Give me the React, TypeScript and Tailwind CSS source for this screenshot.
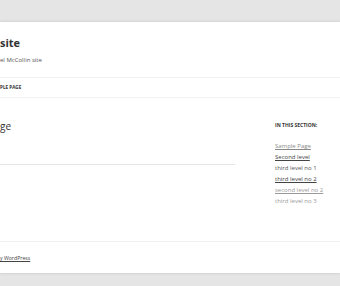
const sectionLinks = [
  { label: "Sample Page", className: "text-[#8a8a8a] underline" },
  { label: "Second level", className: "text-[#444] underline" },
  { label: "third level no 1", className: "text-[#555]" },
  { label: "third level no 2", className: "text-[#444] underline" },
  { label: "second level no 2", className: "text-[#9a9a9a] underline" },
  { label: "third level no 3", className: "text-[#9a9a9a]" },
];

export default function App() {
  return (
    <div
      className="h-[286px] w-[340px] overflow-hidden bg-[#e5e5e5] pt-[22px] text-[#333]"
      style={{ fontFamily: '"Open Sans", "Noto Sans", sans-serif' }}
    >
      <div className="flex h-[251px] flex-col bg-white shadow-[0_0_3px_rgba(0,0,0,0.15)]">
        <header className="pt-[14px]">
          <h1 className="text-[11px] font-bold leading-[14px] text-[#333]">site</h1>
          <p className="mt-[6px] text-[6px] leading-[8px] text-[#555]">el McCollin site</p>
        </header>

        <nav className="mt-[13px] border-y border-[#f2f2f2] pb-[6px] pt-[5px] text-[4.6px] font-bold uppercase leading-[8px] text-[#333]">
          ple page
        </nav>

        <main className="flex flex-1 pt-[21px]">
          <article className="w-[235px]">
            <h2 className="text-[10px] leading-[14px] text-[#333]">ge</h2>
            <hr className="mt-[31px] border-t border-[#e6e6e6]" />
          </article>
          <aside className="ml-[40px] mt-[2px] w-[65px]">
            <h3 className="text-[5px] font-bold uppercase leading-[8px] text-[#333]">In this section:</h3>
            <ul className="mt-[12px] flex flex-col">
              {sectionLinks.map((link) => (
                <li key={link.label} className={`text-[6px] leading-[11px] ${link.className}`}>
                  {link.label}
                </li>
              ))}
            </ul>
          </aside>
        </main>

        <footer className="border-t border-[#f0f0f0] pb-[11px] pt-[12px] text-[5.2px] leading-[8px] text-[#444]">
          <span className="underline">y WordPress</span>
        </footer>
      </div>
    </div>
  );
}
